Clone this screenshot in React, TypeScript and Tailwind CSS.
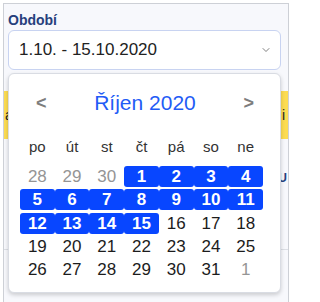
import { ChevronDown } from 'lucide-react';

const weekdays = ['po', 'út', 'st', 'čt', 'pá', 'so', 'ne'];

type Day = { n: number; muted?: boolean; sel?: boolean };

function buildDays(): Day[] {
  const days: Day[] = [28, 29, 30].map(n => ({ n, muted: true }));
  for (let n = 1; n <= 31; n++) days.push({ n, sel: n <= 15 });
  days.push({ n: 1, muted: true });
  return days;
}

function Calendar() {
  const days = buildDays();
  return (
    <div className="absolute left-[4px] top-[69px] z-10 h-[220px] w-[273px] rounded-[6px] border border-[#d9dce3] bg-white shadow-[0_2px_4px_rgba(0,0,0,0.18)]">
      <div className="pt-[9px]">
        <div className="flex h-[40px] items-center justify-between pl-[27px] pr-[26px]">
          <span className="text-[18px] font-bold text-[#7d7d7d]">&lt;</span>
          <span className="text-[21px] text-[#1f5cf6]">Říjen 2020</span>
          <span className="text-[18px] font-bold text-[#7d7d7d]">&gt;</span>
        </div>
      </div>
      <div className="ml-[11px] mt-[13px] grid h-[22px] w-[243px] grid-cols-7 items-center text-center text-[15px] text-[#333]">
        {weekdays.map(w => (
          <span key={w}>{w}</span>
        ))}
      </div>
      <div className="ml-[11px] mt-[8px] grid w-[243px] grid-cols-7 gap-y-[2.4px] text-center text-[17px]">
        {days.map((d, i) => (
          <div
            key={i}
            className={
              d.sel
                ? 'flex h-[21px] items-center justify-center rounded-[3px] bg-[#0846ff] font-bold text-white'
                : d.muted
                  ? 'flex h-[21px] items-center justify-center text-[#959595]'
                  : 'flex h-[21px] items-center justify-center text-[#1c1c1c]'
            }
          >
            {d.n}
          </div>
        ))}
      </div>
    </div>
  );
}

export default function App() {
  return (
    <div className="h-[302px] w-[290px] overflow-hidden bg-white pl-[3px] pt-[3px] font-['Liberation_Sans',Arial,sans-serif]">
      <div className="relative h-[299px] w-[286px] overflow-hidden border-l border-r border-t border-[#cdd0d6] bg-[#f7f8fc]">
        <div className="pl-[4px] pr-[6px] pt-[6px]">
          <div className="h-[20px] text-[14px] font-bold leading-[20px] text-[#263f7c]">Období</div>
          <div className="flex h-[40px] w-[273px] items-center justify-between rounded-[6px] border border-[#c8d3f1] bg-white pl-[10px] pr-[8px]">
            <span className="text-[17px] text-[#222]">1.10. - 15.10.2020</span>
            <ChevronDown className="h-[12px] w-[12px] text-[#555]" strokeWidth={1.5} />
          </div>
        </div>
        <div className="mt-[21px] flex h-[48px] items-center justify-between bg-[#fcdc52] px-[1px] text-[14px] text-[#222]">
          <span>á</span>
          <span className="pr-[2px]">i</span>
        </div>
        <div className="mt-[32px] flex h-[14px] items-center justify-end pr-[1px] text-[12px] font-bold text-[#263f7c]">
          <span>U</span>
        </div>
        <div className="mt-[64px] border-t border-[#dcdfe5]" />
        <Calendar />
      </div>
    </div>
  );
}
